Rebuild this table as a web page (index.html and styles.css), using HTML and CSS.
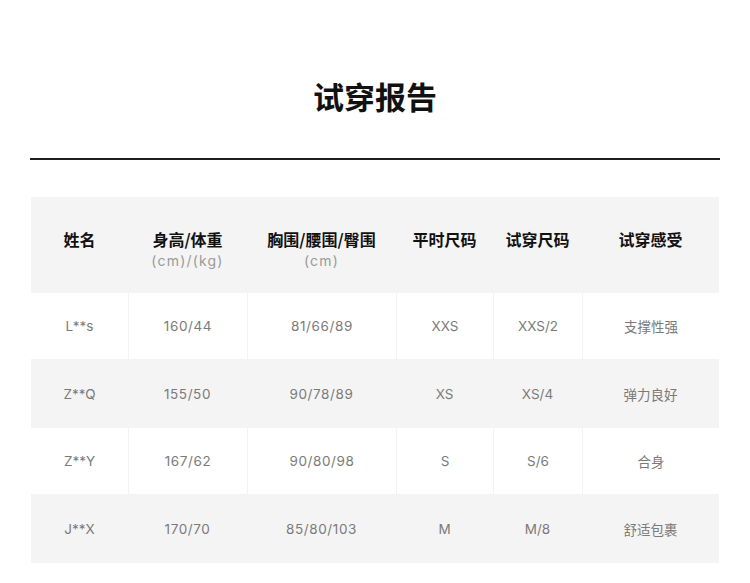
FILE: index.html
```html
<!DOCTYPE html>
<html lang="zh-CN">
<head>
<meta charset="utf-8">
<title>试穿报告</title>
<link rel="stylesheet" href="styles.css">
</head>
<body>
<div class="page">
  <h1 class="title">试穿报告</h1>
  <div class="rule"></div>
  <div class="table">
    <div class="row head">
      <div class="cell"><span class="th">姓名</span></div>
      <div class="cell"><span class="th">身高/体重</span><span class="sub">(cm)/(kg)</span></div>
      <div class="cell"><span class="th">胸围/腰围/臀围</span><span class="sub">(cm)</span></div>
      <div class="cell"><span class="th">平时尺码</span></div>
      <div class="cell"><span class="th">试穿尺码</span></div>
      <div class="cell"><span class="th">试穿感受</span></div>
    </div>
    <div class="row">
      <div class="cell">L**s</div>
      <div class="cell num">160/44</div>
      <div class="cell num">81/66/89</div>
      <div class="cell">XXS</div>
      <div class="cell">XXS/2</div>
      <div class="cell">支撑性强</div>
    </div>
    <div class="row alt">
      <div class="cell">Z**Q</div>
      <div class="cell num">155/50</div>
      <div class="cell num">90/78/89</div>
      <div class="cell">XS</div>
      <div class="cell">XS/4</div>
      <div class="cell">弹力良好</div>
    </div>
    <div class="row">
      <div class="cell">Z**Y</div>
      <div class="cell num">167/62</div>
      <div class="cell num">90/80/98</div>
      <div class="cell">S</div>
      <div class="cell">S/6</div>
      <div class="cell">合身</div>
    </div>
    <div class="row alt">
      <div class="cell">J**X</div>
      <div class="cell num">170/70</div>
      <div class="cell num">85/80/103</div>
      <div class="cell">M</div>
      <div class="cell">M/8</div>
      <div class="cell">舒适包裹</div>
    </div>
  </div>
</div>
</body>
</html>
```

FILE: styles.css
```css
html, body {
  margin: 0;
  padding: 0;
  background: #ffffff;
}
body {
  font-family: "Inter", "Noto Sans CJK SC", sans-serif;
  color: #222;
}
.page {
  width: 690px;
  margin: 0 auto;
  display: flex;
  flex-direction: column;
}
.title {
  margin: 76px 0 0 0;
  height: 44px;
  line-height: 44px;
  text-align: center;
  font-size: 31px;
  font-weight: 700;
  color: #111;
}
.rule {
  margin-top: 38px;
  height: 2px;
  background: #1e1e1e;
}
.table {
  margin-top: 37px;
  margin-left: 1px;
  width: 688px;
  display: flex;
  flex-direction: column;
}
.row {
  display: grid;
  grid-template-columns: 97px 119px 149px 97px 89px 137px;
  height: 66px;
  background: #ffffff;
}
.row.alt {
  height: 69px;
  background: #f4f4f4;
}
.row.head {
  height: 96px;
  background: #f4f4f4;
}
.cell {
  display: flex;
  align-items: center;
  justify-content: center;
  font-size: 13.5px;
  color: #7a7a7a;
  border-left: 1px solid #f3f3f3;
}
.cell:first-child {
  border-left: none;
}
.row.alt .cell,
.row.head .cell {
  border-left: none;
}
.num {
  letter-spacing: 0.6px;
}
.head .cell {
  flex-direction: column;
  justify-content: flex-start;
  padding-top: 30px;
}
.th {
  font-family: "Noto Sans CJK SC", sans-serif;
  font-size: 16px;
  font-weight: 700;
  color: #111;
  line-height: 24px;
}
.sub {
  font-size: 14px;
  color: #9a9a9a;
  letter-spacing: 1.2px;
  line-height: 20px;
}
```
